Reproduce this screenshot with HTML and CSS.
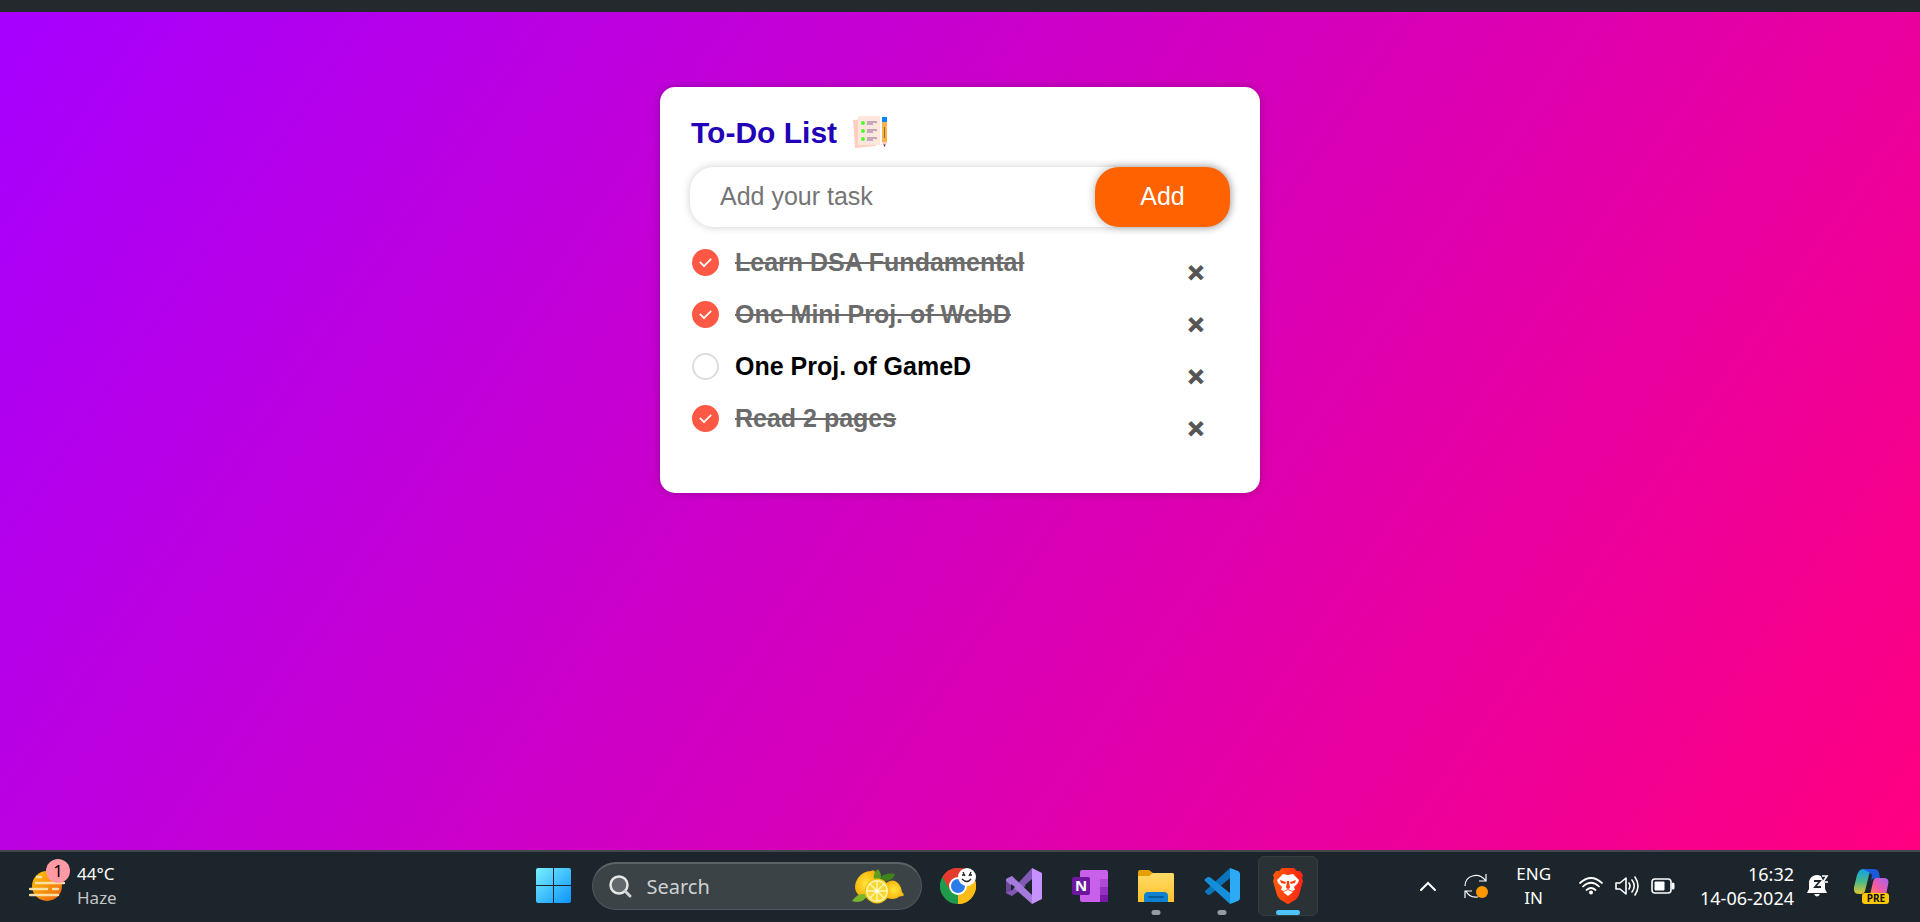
FILE: index.html
```html
<!DOCTYPE html>
<html lang="en">
<head>
<meta charset="utf-8">
<title>To-Do List</title>
<link rel="stylesheet" href="styles.css">
</head>
<body>
<div class="top-strip"></div>
<main class="page">
  <section class="card">
    <h1 class="title">To-Do List
      <svg class="title-icon" viewBox="0 0 36 36" aria-hidden="true">
        <path d="M0 5l21-2 2 28-21 2z" fill="#ffcfc0"/>
        <rect x="5" y="1" width="22" height="29" rx="1" fill="#ffe6dc"/>
        <g fill="#4cff2e"><circle cx="10" cy="8" r="2"/><circle cx="10" cy="16" r="2"/><circle cx="10" cy="24" r="2"/></g>
        <path d="M14 7h10M14 9h6M14 15h10M14 17h6M14 23h10M14 25h6" stroke="#8a6c9a" stroke-width="1"/>
        <path d="M29 2h5v5h-5z" fill="#0a84ff"/>
        <path d="M29 7h5v20h-5z" fill="#ffb24a"/>
        <path d="M31.500 12v11" stroke="#9c6a2c"/>
        <path d="M29 27h5l-2 5h-1z" fill="#ffc9b8"/>
        <path d="M30.500 29.500h2l-1 2.500z" fill="#333"/>
      </svg>
    </h1>
    <form class="entry">
      <input class="entry-text" type="text" placeholder="Add your task" aria-label="Add your task">
      <button class="entry-add" type="button">Add</button>
    </form>
    <ul class="tasks">
      <li class="task"><label class="task-label"><input class="tick" type="checkbox" checked><span class="task-text">Learn DSA Fundamental</span></label><button class="remove" type="button" aria-label="Remove Learn DSA Fundamental">×</button></li>
      <li class="task"><label class="task-label"><input class="tick" type="checkbox" checked><span class="task-text">One Mini Proj. of WebD</span></label><button class="remove" type="button" aria-label="Remove One Mini Proj. of WebD">×</button></li>
      <li class="task"><label class="task-label"><input class="tick" type="checkbox"><span class="task-text">One Proj. of GameD</span></label><button class="remove" type="button" aria-label="Remove One Proj. of GameD">×</button></li>
      <li class="task"><label class="task-label"><input class="tick" type="checkbox" checked><span class="task-text">Read 2 pages</span></label><button class="remove" type="button" aria-label="Remove Read 2 pages">×</button></li>
    </ul>
  </section>
</main>
<footer class="taskbar">
  <div class="bar-left">
    <button class="weather" type="button">
      <span class="weather-icon">
        <svg width="36" height="34" viewBox="0 0 36 34" aria-hidden="true">
          <defs><linearGradient id="sun" x1="0" y1="0" x2="1" y2="1"><stop offset="0" stop-color="#ffc800"/><stop offset="1" stop-color="#ef5f12"/></linearGradient></defs>
          <circle cx="18" cy="17" r="15" fill="url(#sun)"/>
          <path d="M8 8h4M7 14h28M1 20h17M24 20h5M1 26h28" stroke="#f8dfa4" stroke-width="2.500" stroke-linecap="round"/>
        </svg>
        <span class="weather-badge">1</span>
      </span>
      <span class="weather-text"><span>44°C</span><span class="muted">Haze</span></span>
    </button>
  </div>
  <nav class="bar-center" aria-label="Taskbar">
    <button class="tile" type="button" aria-label="Start">
      <svg width="36" height="36" viewBox="0 0 36 36"><defs><linearGradient id="win" x1="0" y1="0" x2="1" y2="1"><stop offset="0" stop-color="#79f0ff"/><stop offset="1" stop-color="#0b93ff"/></linearGradient></defs>
        <path fill="url(#win)" d="M2 0h15v17H0V2q0-2 2-2zM18 0h15q2 0 2 2v15H18zM0 18h17v17H2q-2 0-2-2zM18 18h17v15q0 2-2 2H18z"/></svg>
    </button>
    <button class="search" type="button">
      <svg width="24" height="24" viewBox="0 0 24 24" aria-hidden="true"><circle cx="10" cy="10" r="8.500" fill="#62686b" stroke="#e6e8e8" stroke-width="2.500"/><path d="M16 16l5 5" stroke="#d0d3d4" stroke-width="3" stroke-linecap="round"/></svg>
      <span class="search-text">Search</span>
      <svg width="54" height="36" viewBox="0 0 54 36" aria-hidden="true">
        <defs><radialGradient id="lemon"><stop offset="0" stop-color="#ffe63d"/><stop offset="1" stop-color="#f7b60c"/></radialGradient></defs>
        <path d="M24 3q-1-3-4-1Q12 2 7 9c-6 9-2 18 6 19 10 0 14-14 11-25z" fill="url(#lemon)"/>
        <path d="M33 18q4-8 11-6 6 3 7 11 3 3 1 4-4 0-6 2-8 3-13-3z" fill="url(#lemon)"/>
        <path d="M23 10q-1-7 4-10 4 5 3 11z" fill="#5d9d22"/><path d="M28 11q4-8 16-6-2 8-14 7z" fill="#3f831b"/>
        <path d="M1 32q6-9 16-7-5 11-16 7z" fill="#7ab52c"/>
        <circle cx="26" cy="22" r="12.500" fill="#f8c512"/><circle cx="26" cy="22" r="11" fill="#fff3a6"/><circle cx="26" cy="22" r="9.500" fill="#f6d934"/>
        <path d="M26 12v20M16 22h20M19 15l14 14M33 15L19 29" stroke="#fff6b8" stroke-width="1.300"/><circle cx="26" cy="22" r="1.500" fill="#fff"/>
      </svg>
    </button>
    <button class="tile" type="button" aria-label="Chrome">
      <svg width="36" height="36" viewBox="0 0 36 36">
        <path d="M18 18L2.400 9A18 18 0 0 1 33.600 9z" fill="#ea4335"/><path d="M18 18L33.600 9A18 18 0 0 1 18 36z" fill="#fbbc15"/>
        <path d="M18 18v18A18 18 0 0 1 2.400 9z" fill="#1e9b4b"/><path d="M2.400 9L10 22l8-12h16l-.4-1A18 18 0 0 0 2.400 9z" fill="#e33b2e"/><path d="M26 22l-8 14a18 18 0 0 0 16-26H18z" fill="#fbbc15"/>
        <circle cx="18" cy="18" r="9" fill="#fff"/><circle cx="18" cy="18" r="7" fill="#2a7de9"/>
        <circle cx="27" cy="9" r="9" fill="#fff"/><path d="M23 4l2 4M31 4l-2 4M22 7h3M29 7h3M22 11q5 5 9 0" stroke="#222" stroke-width="1.300" fill="none"/>
      </svg>
    </button>
    <button class="tile" type="button" aria-label="Visual Studio">
      <svg width="36" height="36" viewBox="0 0 36 36">
        <path d="M6 8L0 11v14l6 3z" fill="#6b4799"/><path d="M6 28L0 25l6-3L26 0v13z" fill="#8158b5"/>
        <path d="M26 0l10 5v26l-10 5z" fill="#c792ff"/><path d="M6 8L26 27v9L0 13v-2z" fill="#a47bdc"/>
        <path d="M5 16v7l4-4z" fill="#1c252b"/><path d="M26 11v13l-7-7z" fill="#1c252b"/>
      </svg>
    </button>
    <button class="tile" type="button" aria-label="OneNote">
      <svg width="36" height="32" viewBox="0 0 36 32">
        <rect x="8" width="28" height="32" rx="2" fill="#c960e9"/><path d="M28 9h8v8h-8z" fill="#ae4bd5"/><path d="M28 17h8v8h-8z" fill="#9332bf"/><path d="M28 25h8v7h-8z" fill="#7819a7"/>
        <rect y="7" width="18" height="18" rx="2" fill="#6d17a0"/><text class="note-n" x="9" y="21" text-anchor="middle">N</text>
      </svg>
    </button>
    <button class="tile running" type="button" aria-label="File Explorer">
      <svg width="36" height="32" viewBox="0 0 36 32">
        <defs><linearGradient id="folder" x1="0" y1="0" x2="0" y2="1"><stop offset="0" stop-color="#ffdb68"/><stop offset="1" stop-color="#ffc12b"/></linearGradient></defs>
        <path d="M0 2q0-2 2-2h9l4 3h19q2 0 2 2v8H0z" fill="#e5a007"/><path d="M0 6h11l4-3h19q2 0 2 2v27H0z" fill="url(#folder)"/>
        <path d="M6 32v-6q0-4 4-4h16q4 0 4 4v6z" fill="#1182d0"/><path d="M11 27h14" stroke="#075a9c" stroke-width="2" stroke-linecap="round"/>
      </svg>
    </button>
    <button class="tile running" type="button" aria-label="VS Code">
      <svg width="36" height="36" viewBox="0 0 36 36">
        <path d="M1 24l3 3q2 0 3-1L26 10V0L1 23z" fill="#0a75bb"/><path d="M1 11l3-2q2 0 3 1l19 15v11L1 13q-1-1 0-2z" fill="#168fda"/><path d="M26 0l8 3q2 1 2 3v24q0 2-2 3l-8 3z" fill="#2caaf5"/>
      </svg>
    </button>
    <button class="tile running active" type="button" aria-label="Brave">
      <svg width="30" height="36" viewBox="0 0 30 36">
        <defs><linearGradient id="brave"><stop offset="0" stop-color="#ff5a0a"/><stop offset="1" stop-color="#ff2415"/></linearGradient></defs>
        <path d="M10 0h11l3 3 3 0 3 4-1 3 1 3-4 14q-1 3-4 5l-5 3q-2 2-4 0l-5-3q-3-2-4-5L0 13l1-3-1-3 3-4h3l3-3z" fill="url(#brave)"/>
        <path d="M15 7l5-1 6 6-1 3-4 4 1 3-3 1-4-2-4 2-3-1 1-3-4-4-1-3 6-6z" fill="#fff"/>
        <path d="M7 12l6 2-1 2-4-1zM23 12l-6 2 1 2 4-1zM14 13h2l1 7-2 1-2-1z" fill="#ff4010"/>
        <path d="M10 24l5-2 5 2-5 4z" fill="#fff"/>
      </svg>
    </button>
  </nav>
  <div class="bar-right">
    <button class="tray" type="button" aria-label="Show hidden icons"><svg width="16" height="10" viewBox="0 0 16 10"><path d="M1 9l7-7 7 7" fill="none" stroke="#fff" stroke-width="2" stroke-linecap="round"/></svg></button>
    <button class="tray" type="button" aria-label="Updates"><svg width="24" height="24" viewBox="0 0 24 24"><path d="M1 12C1 2 14-3 22 7M22 0v7h-7M1 24v-7h7M2 17q3 7 12 6" fill="none" stroke="#fff" stroke-width="1.200"/><circle cx="18" cy="18" r="6" fill="#ff9800"/></svg></button>
    <button class="tray lang" type="button"><span>ENG</span><span>IN</span></button>
    <button class="tray status" type="button" aria-label="Network, volume, battery">
      <svg width="24" height="18" viewBox="0 0 24 18"><path d="M1 6q11-10 22 0M4 9.500q8-7.500 16 0M7.500 13q4.500-4 9 0" fill="none" stroke="#fff" stroke-width="1.700" stroke-linecap="round"/><circle cx="12" cy="15.500" r="2" fill="#fff"/></svg>
      <svg width="24" height="20" viewBox="0 0 24 20"><path d="M1 7h4l6-5v16l-6-5H1zM14 7q2 3 0 6M17 4q4.500 6 0 12M20 1q6 9 0 18" fill="none" stroke="#fff" stroke-width="1.600" stroke-linecap="round" stroke-linejoin="round"/></svg>
      <svg width="24" height="16" viewBox="0 0 24 16"><rect x="1" y="1" width="19" height="14" rx="3" fill="none" stroke="#fff" stroke-width="1.600"/><rect x="3.500" y="3.500" width="10" height="9" rx="1" fill="#fff"/><path d="M22 6v4" stroke="#fff" stroke-width="3" stroke-linecap="round"/></svg>
    </button>
    <button class="tray clock" type="button"><span>16:32</span><span>14-06-2024</span></button>
    <button class="tray bell" type="button" aria-label="Notifications"><svg width="22" height="24" viewBox="0 0 22 24"><path d="M10 1c-5 0-8 4-8 8v6l-2 4h20l-2-4V9c0-4-3-8-8-8zM7 20q3 5 6 0z" fill="#fff"/><path d="M13 0h9v9h-5z" fill="#1c252b"/><path d="M15 2h5l-4 6h5" fill="none" stroke="#fff" stroke-width="1.600"/><path d="M7 7h6l-5 6h6" fill="none" stroke="#1c252b" stroke-width="1.800"/></svg></button>
    <button class="tray copilot" type="button" aria-label="Copilot">
      <svg width="36" height="35" viewBox="0 0 36 35">
        <defs><linearGradient id="cpl" x1="0" y1="0" x2="0" y2="1"><stop offset="0" stop-color="#139fe9"/><stop offset=".5" stop-color="#48b98a"/><stop offset="1" stop-color="#e3c62c"/></linearGradient><linearGradient id="cpr" x1="1" y1="0" x2="0" y2="1"><stop offset="0" stop-color="#a463f5"/><stop offset=".6" stop-color="#f45aa0"/><stop offset="1" stop-color="#ff8a45"/></linearGradient></defs>
        <path d="M9 0h11q-4 1-5 6l-4 16q-1 3-4 3H5q-6 0-5-7L3 6q2-6 6-6z" fill="url(#cpl)"/><path d="M9 0h11q4 0 5 4l1 5h-4q-4 0-5 4l1-7q-4-4-9-6z" fill="#1a59dc"/>
        <path d="M22 9h8q6 0 4 7l-2 10H16l3-13q1-4 3-4z" fill="url(#cpr)"/>
        <rect x="8" y="24" width="27" height="11" rx="3" fill="#ffc800"/><text class="pre" x="22" y="33" text-anchor="middle">PRE</text>
      </svg>
    </button>
  </div>
</footer>
</body>
</html>
```
FILE: styles.css
```css
* { box-sizing: border-box; }

body {
  margin: 0;
  min-height: 100vh;
  display: flex;
  flex-direction: column;
  font-family: "Liberation Sans", Arial, sans-serif;
}

button {
  border: 0;
  padding: 0;
  background: none;
  color: inherit;
  font: inherit;
}

svg { display: block; flex: none; }

.top-strip { height: 12px; background: #23292d; }

.page {
  flex: 1;
  padding: 75px 20px;
  background: linear-gradient(125deg, #a600ff, #ff0080);
}

.card {
  max-width: 600px;
  margin: 0 auto;
  padding: 28px 30px 49px;
  border-radius: 15px;
  background: #fff;
  box-shadow: 0 0 8px rgba(0, 0, 0, 0.25);
}

.title {
  display: flex;
  align-items: center;
  gap: 16px;
  margin: 0 0 16px 1px;
  font-size: 30px;
  line-height: 36px;
  color: #2200b8;
}

.title-icon { width: 36px; height: 36px; }

.entry {
  display: flex;
  height: 60px;
  border-radius: 24px;
  background: #fff;
  box-shadow: 0 0 8px rgba(0, 0, 0, 0.2);
}

.entry-text {
  flex: 1;
  min-width: 0;
  padding: 0 30px 2px;
  border: 0;
  outline: 0;
  background: none;
  font: 25px "Liberation Sans", Arial, sans-serif;
}

.entry-text::placeholder { color: #757575; }

.entry-add {
  width: 135px;
  padding-bottom: 2px;
  border-radius: 24px;
  background: #ff6200;
  color: #fff;
  font-size: 25px;
  box-shadow: 0 0 8px rgba(0, 0, 0, 0.3);
}

.tasks {
  margin: 0;
  padding: 9px 16px 0 2px;
  list-style: none;
}

.task {
  display: flex;
  justify-content: space-between;
  height: 52px;
}

.task-label {
  display: flex;
  align-items: center;
  gap: 16px;
  font-size: 25px;
  font-weight: bold;
}

.tick {
  appearance: none;
  width: 27px;
  height: 27px;
  margin: 0;
  display: grid;
  place-items: center;
  border: 2px solid #ddd;
  border-radius: 50%;
}

.tick:checked { border-color: #ff5945; background: #ff5945; }

.tick:checked::before {
  content: "";
  width: 11px;
  height: 6px;
  margin-bottom: 3px;
  border: solid #fff;
  border-width: 0 0 2px 2px;
  transform: rotate(-45deg) scale(0.85);
}

.tick:checked + .task-text { color: #6b6b6b; text-decoration: line-through; }

.remove {
  width: 36px;
  padding-top: 22px;
  color: #555;
  font-size: 28px;
  font-weight: bold;
  line-height: 30px;
  -webkit-text-stroke: 1px #555;
}

.taskbar {
  display: flex;
  align-items: center;
  height: 72px;
  padding: 0 30px 2px 29px;
  border-top: 2px solid #41474b;
  background: #1c252b;
  color: #fff;
  font-family: "Noto Sans", sans-serif;
  font-size: 17px;
  line-height: 24px;
}

.bar-left, .bar-right { flex: 1 1 0; display: flex; align-items: center; }
.bar-right { justify-content: flex-end; }

.weather { display: flex; align-items: center; gap: 12px; text-align: left; }
.weather-icon { position: relative; }
.weather-text { display: flex; flex-direction: column; }
.muted { color: #c3c5c7; }

.weather-badge {
  position: absolute;
  top: -10px;
  right: -5px;
  width: 24px;
  height: 24px;
  border-radius: 50%;
  background: #ff99a4;
  color: #000;
  text-align: center;
}

.bar-center { display: flex; align-items: center; gap: 6px; margin-right: 78px; }

.tile {
  position: relative;
  display: grid;
  place-items: center;
  width: 60px;
  height: 60px;
  border-radius: 6px;
}

.tile.active { background: #2a3236; border: 1px solid #353d41; }

.running::after {
  content: "";
  position: absolute;
  bottom: 1px;
  left: 50%;
  width: 9px;
  height: 5px;
  border-radius: 3px;
  background: #999c9e;
  transform: translateX(-50%);
}

.running.active::after { bottom: 0; width: 24px; background: #4cc2ff; }

.search {
  display: flex;
  align-items: center;
  gap: 14px;
  width: 330px;
  height: 48px;
  margin-left: 2px;
  padding: 0 16px;
  border: 1px solid #51585b;
  border-top: 2px solid #5d6467;
  border-radius: 24px;
  background: #3b4346;
}

.search-text { flex: 1; color: #cfd2d3; font-size: 20px; text-align: left; }

.note-n { fill: #fff; font: bold 15px "Noto Sans", sans-serif; }
.pre { fill: #111; font: bold 10px "Noto Sans", sans-serif; }

.lang, .clock { display: flex; flex-direction: column; }
.lang { margin: 0 28px; align-items: center; }
.status { display: flex; align-items: center; gap: 12px; }
.clock { margin: 0 13px 0 25px; align-items: flex-end; font-size: 18px; }
.bell { margin-right: 25px; }
.tray:first-child { margin-right: 28px; }
```
